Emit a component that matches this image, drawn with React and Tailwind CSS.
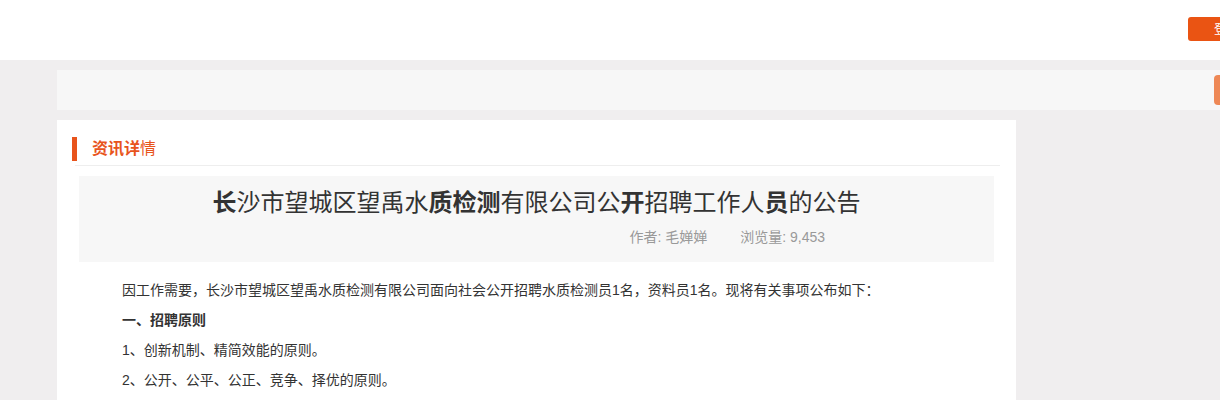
import React from 'react';

const body = [
  { text: '因工作需要，长沙市望城区望禹水质检测有限公司面向社会公开招聘水质检测员1名，资料员1名。现将有关事项公布如下：' },
  { text: '一、招聘原则', bold: true },
  { text: '1、创新机制、精简效能的原则。' },
  { text: '2、公开、公平、公正、竞争、择优的原则。' },
];

const App = () => {
  return (
    <div
      className="w-[1220px] h-[400px] overflow-hidden bg-[#f0eeef]"
      style={{ fontFamily: '"Liberation Sans", "Noto Sans CJK SC", sans-serif' }}
    >
      <header className="h-[60px] bg-white flex items-start">
        <div className="ml-[1188px] mt-[17px] w-[64px] h-[24px] shrink-0 rounded-[3px] bg-[#ea5413] text-white text-[13px] leading-[24px] pl-[26px]">
          登录
        </div>
      </header>

      <div className="ml-[57px] w-[1200px] pt-[10px]">
        <div className="h-[40px] bg-[#f7f7f7] flex items-center">
          <div className="ml-[1157px] w-[40px] h-[30px] rounded-[4px] bg-[#ee8856]" />
        </div>

        <main className="mt-[10px] w-[959px] bg-white px-[15px] pt-[17px] pb-[20px]">
          <div className="flex items-center h-[24px]">
            <span className="w-[5px] h-[24px] bg-[#e8541c]" />
            <h2 className="ml-[15px] text-[16px] text-[#e8541c] leading-[22px]">
              <span className="font-bold">资讯详</span>
              <span className="font-normal">情</span>
            </h2>
          </div>
          <div className="mt-[4px] ml-[3px] mr-[1px] border-t border-[#eeeeee]" />

          <div className="mt-[10px] mx-[7px] h-[86px] bg-[#f7f7f7] pt-[10px]">
            <h1 className="text-center text-[24px] leading-[34px] text-[#333333]">
              <span className="font-bold">长</span>沙市望城区望禹水
              <span className="font-bold">质检测</span>有限公司公
              <span className="font-bold">开</span>招聘工作人
              <span className="font-bold">员</span>的公告
            </h1>
            <div className="mt-[7px] flex justify-end pr-[169px] text-[14px] leading-[20px] text-[#999999] gap-[33px]">
              <span>作者: 毛婵婵</span>
              <span>浏览量: 9,453</span>
            </div>
          </div>

          <div className="mt-[13px] pl-[50px] text-[14px] text-[#333333]">
            {body.map((p, i) => (
              <p key={i} className={`leading-[30px] ${p.bold ? 'font-bold' : ''}`}>
                {p.text}
              </p>
            ))}
          </div>
        </main>
      </div>
    </div>
  );
};

export default App;
